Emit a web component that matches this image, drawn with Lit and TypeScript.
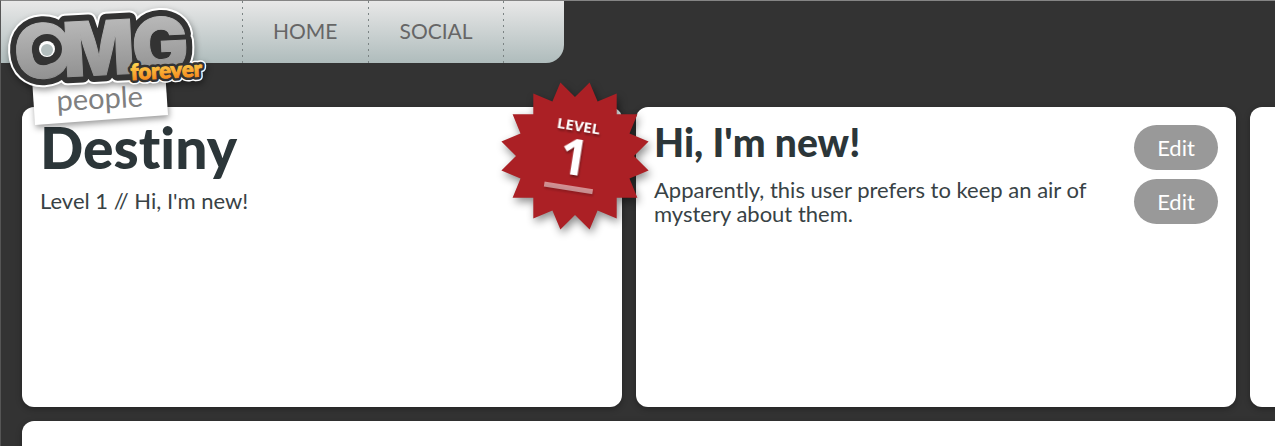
import { LitElement, html, svg, css } from "lit";
import { customElement, property } from "lit/decorators.js";

const STAR_TIPS = 16;
const starPoints = Array.from({ length: STAR_TIPS * 2 }, (_, i) => {
  const radius = i % 2 ? 75 : 59;
  const angle = (i * Math.PI) / STAR_TIPS - Math.PI / 2;
  return `${(75 + radius * Math.cos(angle)).toFixed(1)},${(75 + radius * Math.sin(angle)).toFixed(1)}`;
}).join(" ");

@customElement("omg-logo")
export class OmgLogo extends LitElement {
  static styles = css`
    :host { display: block; }
    .logo { display: block; width: 220px; height: 135px; overflow: visible; }
    .omg { font-family: Inter, sans-serif; font-weight: 900; font-size: 75px; }
    .forever { font-family: Lato, sans-serif; font-weight: 900; font-size: 22px; }
    .people { font-family: Lato, sans-serif; font-size: 29px; fill: #808080; }
    .outer { fill: #fff; stroke: #fff; stroke-width: 17px; stroke-linejoin: round; }
    .rim { fill: #333; stroke: #333; stroke-width: 13px; stroke-linejoin: round; }
    .outer.forever { stroke-width: 9px; }
    .rim.forever { stroke-width: 6px; }
    .metal { fill: url(#metal); stroke: url(#metal); stroke-width: 1px; }
    .gold { fill: url(#gold); stroke: url(#gold); stroke-width: 1px; }
    .soft { filter: drop-shadow(1px 3px 3px rgba(0, 0, 0, 0.4)); }
  `;

  private word(kind: string) {
    return svg`<g class=${`omg ${kind}`} transform="rotate(-3 100 50)">
      <text x="14" y="75">O</text><text x="63" y="75">M</text><text x="132" y="75">G</text>
    </g>`;
  }

  private tag(kind: string) {
    return svg`<text class=${`forever ${kind}`} x="131" y="80" transform="rotate(-3 131 80)">forever</text>`;
  }

  render() {
    return html`
      <svg class="logo" viewBox="0 0 220 135" role="img" aria-label="OMG forever people">
        <defs>
          <linearGradient id="metal" gradientUnits="userSpaceOnUse" x1="0" y1="14" x2="0" y2="78">
            <stop offset="0" stop-color="#bcbcbc" /><stop offset="1" stop-color="#909090" />
          </linearGradient>
          <linearGradient id="gold" gradientUnits="userSpaceOnUse" x1="0" y1="64" x2="0" y2="81">
            <stop offset="0" stop-color="#ffd34f" /><stop offset="1" stop-color="#f58a1c" />
          </linearGradient>
        </defs>
        <g class="soft">
          <polygon points="32,78 165,70 168,115 35,125" fill="#fff" />
        </g>
        <text class="people" x="57" y="111" transform="rotate(-3 57 111)">people</text>
        <g class="soft">${this.word("outer")}${this.tag("outer")}</g>
        ${this.word("rim")}${this.word("metal")}
        <circle cx="47" cy="49" r="15" fill="#333" />
        <circle cx="47" cy="49" r="8" fill="#fff" />
        <circle cx="47" cy="50" r="6" fill="#b4bfbf" />
        ${this.tag("rim")}${this.tag("gold")}
      </svg>
    `;
  }
}

@customElement("level-badge")
export class LevelBadge extends LitElement {
  @property({ type: Number }) level = 1;

  static styles = css`
    :host { display: block; }
    .badge { display: block; width: 150px; height: 150px; overflow: visible; }
    .star { fill: #ab2025; filter: drop-shadow(2px 4px 4px rgba(0, 0, 0, 0.45)); }
    .ink {
      fill: #fff;
      font-family: "Open Sans", sans-serif;
      font-weight: 700;
      text-anchor: middle;
      filter: drop-shadow(1px 2px 1px rgba(0, 0, 0, 0.35));
    }
    .label { font-size: 15px; }
    .number { font-size: 50px; }
    .bar { opacity: 0.5; }
  `;

  render() {
    return html`
      <svg class="badge" viewBox="0 0 150 150">
        <polygon class="star" points=${starPoints} />
        <g class="ink" transform="rotate(9 75 75)">
          <text class="label" x="74" y="50">LEVEL</text>
          <text class="number" x="74" y="94">${this.level}</text>
          <rect class="bar" x="49" y="105" width="49" height="5" />
        </g>
      </svg>
    `;
  }
}

@customElement("app-root")
export class AppRoot extends LitElement {
  static styles = css`
    :host {
      display: block;
      position: relative;
      box-sizing: border-box;
      height: 100vh;
      overflow: hidden;
      border-top: 1px solid #858585;
      border-left: 1px solid #555;
      background: #333;
      color: #384245;
      font-family: Lato, sans-serif;
      font-size: 22px;
      line-height: 24px;
      font-variant-ligatures: none;
    }
    * { box-sizing: border-box; }
    .nav {
      display: flex;
      width: max-content;
      height: 62px;
      padding: 0 60px 0 241px;
      border-radius: 0 0 18px 0;
      background: linear-gradient(#e8e8e8, #afbcbc);
      font-size: 21px;
    }
    .nav-link {
      --dots: repeating-linear-gradient(#7b8383 0 2px, transparent 2px 6px);
      display: flex;
      align-items: center;
      padding: 0 31px 2px;
      background: var(--dots) left / 1px 100% no-repeat;
      color: #666;
      text-decoration: none;
    }
    .nav-link:last-child {
      background: var(--dots) left / 1px 100% no-repeat, var(--dots) right / 1px 100% no-repeat;
    }
    .logo { position: absolute; top: -1px; left: -1px; z-index: 2; }
    .board { display: grid; gap: 14px; padding: 44px 0 0 21px; }
    .row { display: flex; gap: 14px; }
    .card {
      position: relative;
      flex: none;
      width: 600px;
      height: 300px;
      padding: 18px;
      border-radius: 12px;
      background: #fff;
      box-shadow: 0 2px 6px rgba(0, 0, 0, 0.3);
    }
    .card.wide { width: 1828px; }
    .name, .title { color: #2c3639; font-weight: 900; }
    .name { margin: 0; font-size: 57px; line-height: 44px; }
    .tagline { margin: 20px 0 0; }
    .badge { position: absolute; top: -26px; right: -28px; z-index: 1; }
    .row .card.profile { z-index: 1; }
    .about { display: flex; align-items: flex-start; justify-content: space-between; gap: 40px; }
    .title { margin: 0 0 19px; font-size: 39px; line-height: 34px; }
    .bio { margin: 0; }
    .actions { display: grid; gap: 9px; }
    .edit {
      width: 84px;
      height: 45px;
      padding: 0;
      border: 0;
      border-radius: 23px;
      background: #999;
      color: #fff;
      font: inherit;
    }
  `;

  render() {
    return html`
      <nav class="nav">
        <a class="nav-link" href="#home">HOME</a>
        <a class="nav-link" href="#social">SOCIAL</a>
      </nav>
      <omg-logo class="logo"></omg-logo>
      <main class="board">
        <div class="row">
          <section class="card profile">
            <h1 class="name">Destiny</h1>
            <p class="tagline">Level 1 // Hi, I'm new!</p>
            <level-badge class="badge" .level=${1}></level-badge>
          </section>
          <section class="card about">
            <div>
              <h2 class="title">Hi, I'm new!</h2>
              <p class="bio">Apparently, this user prefers to keep an air of mystery about them.</p>
            </div>
            <div class="actions">
              <button class="edit" type="button" aria-label="Edit title">Edit</button>
              <button class="edit" type="button" aria-label="Edit bio">Edit</button>
            </div>
          </section>
          <section class="card"></section>
        </div>
        <div class="row"><section class="card wide"></section></div>
      </main>
    `;
  }
}
